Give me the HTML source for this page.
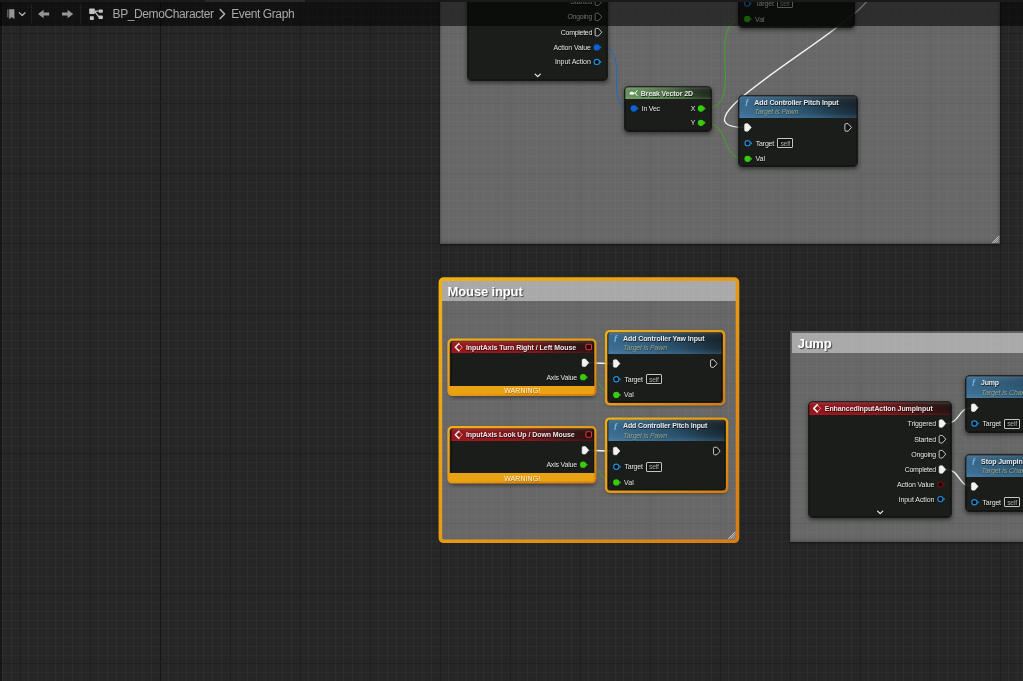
<!DOCTYPE html>
<html lang="en"><head><meta charset="utf-8"><title>BP_DemoCharacter - Event Graph</title>
<style>
html,body{margin:0;padding:0}
body{width:1023px;height:681px;overflow:hidden;background:#262626;position:relative;font-family:'Liberation Sans',sans-serif}
.layer{position:absolute;left:0;top:0}
#txt,#top{position:absolute;left:0;top:0;width:1023px;height:681px;will-change:transform;transform:translateZ(0)}
.t{position:absolute;white-space:pre;display:block}
.cm{position:absolute;background:rgba(255,255,255,.3);box-shadow:inset 0 0 0 1.6px rgba(0,0,0,.10), inset -2px -2px 4px rgba(0,0,0,.10), 0 1px 2px rgba(0,0,0,.5)}
.ct{position:absolute;background:rgba(255,255,255,.44)}
.node{position:absolute;box-sizing:border-box;background:rgba(18,21,18,.90);box-shadow:0 0 0 0.8px rgba(5,5,5,.85), 0 2px 4px 0.5px rgba(0,0,0,.5);overflow:hidden}
.hd{position:absolute;left:0;top:0;right:0}
.node::after{content:'';position:absolute;left:0;top:0;right:0;bottom:0;border-radius:inherit;box-shadow:inset 0 0 0 0.5px rgba(0,0,0,.55)}
.hd.blue{background:linear-gradient(180deg,rgba(255,255,255,.16) 0,rgba(255,255,255,.05) 14%,rgba(255,255,255,0) 35%,rgba(110,175,225,0) 78%,rgba(110,175,225,.16) 100%),linear-gradient(29deg,#41739a 0%,#366484 25%,#2b526d 50%,#1f3849 70%,#18252e 88%,#161d22 100%)}
.hd.red{background:linear-gradient(180deg,rgba(255,255,255,.20) 0,rgba(255,255,255,.04) 18%,rgba(255,255,255,0) 40%,rgba(255,40,50,0) 80%,rgba(255,40,50,.16) 100%),linear-gradient(40deg,#97161c 0%,#8a161b 35%,#6a1519 58%,#3a1314 80%,#1f1413 100%)}
.hd.green{background:linear-gradient(180deg,rgba(255,255,255,.18) 0,rgba(255,255,255,.04) 20%,rgba(255,255,255,0) 40%,rgba(160,230,150,0) 78%,rgba(160,230,150,.16) 100%),linear-gradient(40deg,#6a9662 0%,#5d8856 30%,#48683f 55%,#2a3a27 78%,#1b211a 100%)}
.warn{position:absolute;background:#e9a212}
.selfbox{position:absolute;width:16.1px;height:10px;box-sizing:border-box;border:0.9px solid #c4c4c4;border-radius:1px;background:rgba(0,0,0,.25)}
#strip{position:absolute;left:0;top:0;width:1023px;height:2px;background:#1a1a1a}
#tabline{position:absolute;left:205px;top:0;width:99.5px;height:1.7px;background:#2b2b2b}
#bar{position:absolute;left:0;top:2px;width:1023px;height:24px;background:rgba(0,0,0,.55)}
#edge{position:absolute;left:0;top:0;width:2px;height:681px;background:rgba(0,0,0,.42)}
.sep{position:absolute;top:4px;width:1px;height:20px;background:rgba(255,255,255,.06)}
</style></head>
<body>
<svg class="layer" width="1023" height="681" viewBox="0 0 1023 681" shape-rendering="crispEdges"><rect x="2" y="0" width="1" height="681" fill="#2d2d2d"/><rect x="11" y="0" width="1" height="681" fill="#2d2d2d"/><rect x="28" y="0" width="1" height="681" fill="#2d2d2d"/><rect x="37" y="0" width="1" height="681" fill="#2d2d2d"/><rect x="46" y="0" width="1" height="681" fill="#2d2d2d"/><rect x="55" y="0" width="1" height="681" fill="#2d2d2d"/><rect x="63" y="0" width="1" height="681" fill="#2d2d2d"/><rect x="72" y="0" width="1" height="681" fill="#2d2d2d"/><rect x="81" y="0" width="1" height="681" fill="#2d2d2d"/><rect x="98" y="0" width="1" height="681" fill="#2d2d2d"/><rect x="107" y="0" width="1" height="681" fill="#2d2d2d"/><rect x="116" y="0" width="1" height="681" fill="#2d2d2d"/><rect x="125" y="0" width="1" height="681" fill="#2d2d2d"/><rect x="133" y="0" width="1" height="681" fill="#2d2d2d"/><rect x="142" y="0" width="1" height="681" fill="#2d2d2d"/><rect x="151" y="0" width="1" height="681" fill="#2d2d2d"/><rect x="168" y="0" width="1" height="681" fill="#2d2d2d"/><rect x="177" y="0" width="1" height="681" fill="#2d2d2d"/><rect x="186" y="0" width="1" height="681" fill="#2d2d2d"/><rect x="195" y="0" width="1" height="681" fill="#2d2d2d"/><rect x="203" y="0" width="1" height="681" fill="#2d2d2d"/><rect x="212" y="0" width="1" height="681" fill="#2d2d2d"/><rect x="221" y="0" width="1" height="681" fill="#2d2d2d"/><rect x="238" y="0" width="1" height="681" fill="#2d2d2d"/><rect x="247" y="0" width="1" height="681" fill="#2d2d2d"/><rect x="256" y="0" width="1" height="681" fill="#2d2d2d"/><rect x="265" y="0" width="1" height="681" fill="#2d2d2d"/><rect x="273" y="0" width="1" height="681" fill="#2d2d2d"/><rect x="282" y="0" width="1" height="681" fill="#2d2d2d"/><rect x="291" y="0" width="1" height="681" fill="#2d2d2d"/><rect x="308" y="0" width="1" height="681" fill="#2d2d2d"/><rect x="317" y="0" width="1" height="681" fill="#2d2d2d"/><rect x="326" y="0" width="1" height="681" fill="#2d2d2d"/><rect x="335" y="0" width="1" height="681" fill="#2d2d2d"/><rect x="343" y="0" width="1" height="681" fill="#2d2d2d"/><rect x="352" y="0" width="1" height="681" fill="#2d2d2d"/><rect x="361" y="0" width="1" height="681" fill="#2d2d2d"/><rect x="378" y="0" width="1" height="681" fill="#2d2d2d"/><rect x="387" y="0" width="1" height="681" fill="#2d2d2d"/><rect x="396" y="0" width="1" height="681" fill="#2d2d2d"/><rect x="405" y="0" width="1" height="681" fill="#2d2d2d"/><rect x="413" y="0" width="1" height="681" fill="#2d2d2d"/><rect x="422" y="0" width="1" height="681" fill="#2d2d2d"/><rect x="431" y="0" width="1" height="681" fill="#2d2d2d"/><rect x="448" y="0" width="1" height="681" fill="#2d2d2d"/><rect x="457" y="0" width="1" height="681" fill="#2d2d2d"/><rect x="466" y="0" width="1" height="681" fill="#2d2d2d"/><rect x="475" y="0" width="1" height="681" fill="#2d2d2d"/><rect x="483" y="0" width="1" height="681" fill="#2d2d2d"/><rect x="492" y="0" width="1" height="681" fill="#2d2d2d"/><rect x="501" y="0" width="1" height="681" fill="#2d2d2d"/><rect x="518" y="0" width="1" height="681" fill="#2d2d2d"/><rect x="527" y="0" width="1" height="681" fill="#2d2d2d"/><rect x="536" y="0" width="1" height="681" fill="#2d2d2d"/><rect x="545" y="0" width="1" height="681" fill="#2d2d2d"/><rect x="553" y="0" width="1" height="681" fill="#2d2d2d"/><rect x="562" y="0" width="1" height="681" fill="#2d2d2d"/><rect x="571" y="0" width="1" height="681" fill="#2d2d2d"/><rect x="588" y="0" width="1" height="681" fill="#2d2d2d"/><rect x="597" y="0" width="1" height="681" fill="#2d2d2d"/><rect x="606" y="0" width="1" height="681" fill="#2d2d2d"/><rect x="615" y="0" width="1" height="681" fill="#2d2d2d"/><rect x="623" y="0" width="1" height="681" fill="#2d2d2d"/><rect x="632" y="0" width="1" height="681" fill="#2d2d2d"/><rect x="641" y="0" width="1" height="681" fill="#2d2d2d"/><rect x="658" y="0" width="1" height="681" fill="#2d2d2d"/><rect x="667" y="0" width="1" height="681" fill="#2d2d2d"/><rect x="676" y="0" width="1" height="681" fill="#2d2d2d"/><rect x="685" y="0" width="1" height="681" fill="#2d2d2d"/><rect x="693" y="0" width="1" height="681" fill="#2d2d2d"/><rect x="702" y="0" width="1" height="681" fill="#2d2d2d"/><rect x="711" y="0" width="1" height="681" fill="#2d2d2d"/><rect x="728" y="0" width="1" height="681" fill="#2d2d2d"/><rect x="737" y="0" width="1" height="681" fill="#2d2d2d"/><rect x="746" y="0" width="1" height="681" fill="#2d2d2d"/><rect x="755" y="0" width="1" height="681" fill="#2d2d2d"/><rect x="763" y="0" width="1" height="681" fill="#2d2d2d"/><rect x="772" y="0" width="1" height="681" fill="#2d2d2d"/><rect x="781" y="0" width="1" height="681" fill="#2d2d2d"/><rect x="798" y="0" width="1" height="681" fill="#2d2d2d"/><rect x="807" y="0" width="1" height="681" fill="#2d2d2d"/><rect x="816" y="0" width="1" height="681" fill="#2d2d2d"/><rect x="825" y="0" width="1" height="681" fill="#2d2d2d"/><rect x="833" y="0" width="1" height="681" fill="#2d2d2d"/><rect x="842" y="0" width="1" height="681" fill="#2d2d2d"/><rect x="851" y="0" width="1" height="681" fill="#2d2d2d"/><rect x="868" y="0" width="1" height="681" fill="#2d2d2d"/><rect x="877" y="0" width="1" height="681" fill="#2d2d2d"/><rect x="886" y="0" width="1" height="681" fill="#2d2d2d"/><rect x="895" y="0" width="1" height="681" fill="#2d2d2d"/><rect x="903" y="0" width="1" height="681" fill="#2d2d2d"/><rect x="912" y="0" width="1" height="681" fill="#2d2d2d"/><rect x="921" y="0" width="1" height="681" fill="#2d2d2d"/><rect x="938" y="0" width="1" height="681" fill="#2d2d2d"/><rect x="947" y="0" width="1" height="681" fill="#2d2d2d"/><rect x="956" y="0" width="1" height="681" fill="#2d2d2d"/><rect x="965" y="0" width="1" height="681" fill="#2d2d2d"/><rect x="973" y="0" width="1" height="681" fill="#2d2d2d"/><rect x="982" y="0" width="1" height="681" fill="#2d2d2d"/><rect x="991" y="0" width="1" height="681" fill="#2d2d2d"/><rect x="1008" y="0" width="1" height="681" fill="#2d2d2d"/><rect x="1017" y="0" width="1" height="681" fill="#2d2d2d"/><rect x="0" y="7" width="1023" height="1" fill="#2d2d2d"/><rect x="0" y="16" width="1023" height="1" fill="#2d2d2d"/><rect x="0" y="25" width="1023" height="1" fill="#2d2d2d"/><rect x="0" y="42" width="1023" height="1" fill="#2d2d2d"/><rect x="0" y="51" width="1023" height="1" fill="#2d2d2d"/><rect x="0" y="60" width="1023" height="1" fill="#2d2d2d"/><rect x="0" y="68" width="1023" height="1" fill="#2d2d2d"/><rect x="0" y="77" width="1023" height="1" fill="#2d2d2d"/><rect x="0" y="86" width="1023" height="1" fill="#2d2d2d"/><rect x="0" y="95" width="1023" height="1" fill="#2d2d2d"/><rect x="0" y="112" width="1023" height="1" fill="#2d2d2d"/><rect x="0" y="121" width="1023" height="1" fill="#2d2d2d"/><rect x="0" y="130" width="1023" height="1" fill="#2d2d2d"/><rect x="0" y="138" width="1023" height="1" fill="#2d2d2d"/><rect x="0" y="147" width="1023" height="1" fill="#2d2d2d"/><rect x="0" y="156" width="1023" height="1" fill="#2d2d2d"/><rect x="0" y="165" width="1023" height="1" fill="#2d2d2d"/><rect x="0" y="182" width="1023" height="1" fill="#2d2d2d"/><rect x="0" y="191" width="1023" height="1" fill="#2d2d2d"/><rect x="0" y="200" width="1023" height="1" fill="#2d2d2d"/><rect x="0" y="208" width="1023" height="1" fill="#2d2d2d"/><rect x="0" y="217" width="1023" height="1" fill="#2d2d2d"/><rect x="0" y="226" width="1023" height="1" fill="#2d2d2d"/><rect x="0" y="235" width="1023" height="1" fill="#2d2d2d"/><rect x="0" y="252" width="1023" height="1" fill="#2d2d2d"/><rect x="0" y="261" width="1023" height="1" fill="#2d2d2d"/><rect x="0" y="270" width="1023" height="1" fill="#2d2d2d"/><rect x="0" y="278" width="1023" height="1" fill="#2d2d2d"/><rect x="0" y="287" width="1023" height="1" fill="#2d2d2d"/><rect x="0" y="296" width="1023" height="1" fill="#2d2d2d"/><rect x="0" y="305" width="1023" height="1" fill="#2d2d2d"/><rect x="0" y="322" width="1023" height="1" fill="#2d2d2d"/><rect x="0" y="331" width="1023" height="1" fill="#2d2d2d"/><rect x="0" y="340" width="1023" height="1" fill="#2d2d2d"/><rect x="0" y="348" width="1023" height="1" fill="#2d2d2d"/><rect x="0" y="357" width="1023" height="1" fill="#2d2d2d"/><rect x="0" y="366" width="1023" height="1" fill="#2d2d2d"/><rect x="0" y="375" width="1023" height="1" fill="#2d2d2d"/><rect x="0" y="392" width="1023" height="1" fill="#2d2d2d"/><rect x="0" y="401" width="1023" height="1" fill="#2d2d2d"/><rect x="0" y="410" width="1023" height="1" fill="#2d2d2d"/><rect x="0" y="418" width="1023" height="1" fill="#2d2d2d"/><rect x="0" y="427" width="1023" height="1" fill="#2d2d2d"/><rect x="0" y="436" width="1023" height="1" fill="#2d2d2d"/><rect x="0" y="445" width="1023" height="1" fill="#2d2d2d"/><rect x="0" y="462" width="1023" height="1" fill="#2d2d2d"/><rect x="0" y="471" width="1023" height="1" fill="#2d2d2d"/><rect x="0" y="480" width="1023" height="1" fill="#2d2d2d"/><rect x="0" y="488" width="1023" height="1" fill="#2d2d2d"/><rect x="0" y="497" width="1023" height="1" fill="#2d2d2d"/><rect x="0" y="506" width="1023" height="1" fill="#2d2d2d"/><rect x="0" y="515" width="1023" height="1" fill="#2d2d2d"/><rect x="0" y="532" width="1023" height="1" fill="#2d2d2d"/><rect x="0" y="541" width="1023" height="1" fill="#2d2d2d"/><rect x="0" y="550" width="1023" height="1" fill="#2d2d2d"/><rect x="0" y="558" width="1023" height="1" fill="#2d2d2d"/><rect x="0" y="567" width="1023" height="1" fill="#2d2d2d"/><rect x="0" y="576" width="1023" height="1" fill="#2d2d2d"/><rect x="0" y="585" width="1023" height="1" fill="#2d2d2d"/><rect x="0" y="602" width="1023" height="1" fill="#2d2d2d"/><rect x="0" y="611" width="1023" height="1" fill="#2d2d2d"/><rect x="0" y="620" width="1023" height="1" fill="#2d2d2d"/><rect x="0" y="628" width="1023" height="1" fill="#2d2d2d"/><rect x="0" y="637" width="1023" height="1" fill="#2d2d2d"/><rect x="0" y="646" width="1023" height="1" fill="#2d2d2d"/><rect x="0" y="655" width="1023" height="1" fill="#2d2d2d"/><rect x="0" y="672" width="1023" height="1" fill="#2d2d2d"/><rect x="20" y="0" width="1" height="681" fill="#1f1f1f"/><rect x="90" y="0" width="1" height="681" fill="#1f1f1f"/><rect x="160" y="0" width="1" height="681" fill="#151515"/><rect x="230" y="0" width="1" height="681" fill="#1f1f1f"/><rect x="300" y="0" width="1" height="681" fill="#1f1f1f"/><rect x="370" y="0" width="1" height="681" fill="#1f1f1f"/><rect x="440" y="0" width="1" height="681" fill="#1f1f1f"/><rect x="510" y="0" width="1" height="681" fill="#1f1f1f"/><rect x="580" y="0" width="1" height="681" fill="#1f1f1f"/><rect x="650" y="0" width="1" height="681" fill="#1f1f1f"/><rect x="720" y="0" width="1" height="681" fill="#1f1f1f"/><rect x="790" y="0" width="1" height="681" fill="#1f1f1f"/><rect x="860" y="0" width="1" height="681" fill="#1f1f1f"/><rect x="930" y="0" width="1" height="681" fill="#1f1f1f"/><rect x="1000" y="0" width="1" height="681" fill="#1f1f1f"/><rect x="0" y="33" width="1023" height="1" fill="#1f1f1f"/><rect x="0" y="103" width="1023" height="1" fill="#1f1f1f"/><rect x="0" y="173" width="1023" height="1" fill="#1f1f1f"/><rect x="0" y="243" width="1023" height="1" fill="#1f1f1f"/><rect x="0" y="313" width="1023" height="1" fill="#1f1f1f"/><rect x="0" y="383" width="1023" height="1" fill="#1f1f1f"/><rect x="0" y="453" width="1023" height="1" fill="#1f1f1f"/><rect x="0" y="523" width="1023" height="1" fill="#1f1f1f"/><rect x="0" y="593" width="1023" height="1" fill="#1f1f1f"/><rect x="0" y="663" width="1023" height="1" fill="#1f1f1f"/></svg>
<div class="cm" style="left:440px;top:-40px;width:560.2px;height:283.8px"></div><div class="cm" style="left:441px;top:280px;width:296px;height:260.5px;box-shadow:none"><div class="ct" style="left:0;top:0;right:0;height:21.2px"></div></div><div class="cm" style="left:789.8px;top:331.4px;width:300px;height:210.4px"><div class="ct" style="left:2.3px;top:1.8px;right:0;height:20.3px"></div></div>
<svg class="layer" width="1023" height="681" viewBox="0 0 1023 681"><path d="M601.80,47.40 C631.90,47.40 600.90,108.50 631.00,108.50" fill="none" stroke="#1c69c4" stroke-width="0.95" stroke-linecap="round" opacity="1"/><path d="M705.80,108.50 C748.57,108.50 701.63,18.80 744.40,18.80" fill="none" stroke="#3cb01c" stroke-width="0.9" stroke-linecap="round" opacity="1"/><path d="M705.80,122.80 C730.67,122.80 719.53,158.80 744.40,158.80" fill="none" stroke="#3cb01c" stroke-width="0.9" stroke-linecap="round" opacity="1"/><path d="M852.8,-15 C946,-15 646.5,127.4 744.4,127.4" fill="none" stroke="#f2f2f2" stroke-width="1.35" stroke-linecap="round" opacity="1"/><path d="M588.5,362.80 C598,362.80 604,363.60 613.5,363.60" fill="none" stroke="#f4f4f4" stroke-width="1.4" stroke-linecap="round" opacity="1"/><path d="M587.80,377.20 C602.23,377.20 598.97,394.90 613.40,394.90" fill="none" stroke="#3cb01c" stroke-width="0.9" stroke-linecap="round" opacity="1"/><path d="M588.5,450.30 C598,450.30 604,451.10 613.5,451.10" fill="none" stroke="#f4f4f4" stroke-width="1.4" stroke-linecap="round" opacity="1"/><path d="M587.80,464.70 C602.23,464.70 598.97,482.40 613.40,482.40" fill="none" stroke="#3cb01c" stroke-width="0.9" stroke-linecap="round" opacity="1"/><path d="M946.00,423.60 C960.00,423.60 958.00,407.60 972.00,407.60" fill="none" stroke="#f4f4f4" stroke-width="1.3" stroke-linecap="round" opacity="1"/><path d="M946.00,469.50 C960.27,469.50 957.73,486.30 972.00,486.30" fill="none" stroke="#f4f4f4" stroke-width="1.3" stroke-linecap="round" opacity="1"/></svg>
<div class="node" style="left:467.70px;top:-35.30px;width:139.30px;height:115.30px;border-radius:3.5px"><div class="hd red" style="height:12.70px;border-radius:3.0px 3.0px 0 0"></div></div><div class="node" style="left:625.20px;top:87.10px;width:85.80px;height:44.00px;border-radius:3.5px"><div class="hd green" style="height:12.30px;border-radius:3.0px 3.0px 0 0"></div></div><div class="node" style="left:738.90px;top:-44.00px;width:115.00px;height:70.60px;border-radius:3.5px"><div class="hd blue" style="height:22.00px;border-radius:3.0px 3.0px 0 0"></div></div><div class="selfbox" style="left:776.80px;top:-1.60px"></div><div class="node" style="left:739.30px;top:95.80px;width:117.40px;height:70.60px;border-radius:3.5px"><div class="hd blue" style="height:22.00px;border-radius:3.0px 3.0px 0 0"></div></div><div class="selfbox" style="left:777.20px;top:138.20px"></div><div class="node" style="left:450.50px;top:340.70px;width:143.10px;height:53.60px;border-radius:3.5px"><div class="hd red" style="height:12.60px;border-radius:3.0px 3.0px 0 0"></div></div><div class="warn" style="left:448.6px;top:385.80px;width:146.8px;height:9.4px;border-radius:0 0 3.5px 3.5px"></div><div class="node" style="left:450.50px;top:428.20px;width:143.10px;height:53.60px;border-radius:3.5px"><div class="hd red" style="height:12.60px;border-radius:3.0px 3.0px 0 0"></div></div><div class="warn" style="left:448.6px;top:473.30px;width:146.8px;height:9.4px;border-radius:0 0 3.5px 3.5px"></div><div class="node" style="left:608.00px;top:331.90px;width:114.40px;height:70.60px;border-radius:3.5px"><div class="hd blue" style="height:22.00px;border-radius:3.0px 3.0px 0 0"></div></div><div class="selfbox" style="left:645.90px;top:374.30px"></div><div class="node" style="left:608.00px;top:419.40px;width:117.40px;height:70.60px;border-radius:3.5px"><div class="hd blue" style="height:22.00px;border-radius:3.0px 3.0px 0 0"></div></div><div class="selfbox" style="left:645.90px;top:461.80px"></div><div class="node" style="left:809.40px;top:402.00px;width:141.60px;height:114.90px;border-radius:3.5px"><div class="hd red" style="height:12.70px;border-radius:3.0px 3.0px 0 0"></div></div><div class="node" style="left:966.10px;top:376.10px;width:128.40px;height:55.80px;border-radius:3.5px"><div class="hd blue" style="height:22.00px;border-radius:3.0px 3.0px 0 0"></div></div><div class="selfbox" style="left:1004.00px;top:418.50px"></div><div class="node" style="left:966.10px;top:454.80px;width:128.40px;height:55.80px;border-radius:3.5px"><div class="hd blue" style="height:22.00px;border-radius:3.0px 3.0px 0 0"></div></div><div class="selfbox" style="left:1004.00px;top:497.20px"></div>
<svg class="layer" width="1023" height="681" viewBox="0 0 1023 681"><defs><linearGradient id="sel" x1="0" y1="0" x2="1" y2="1"><stop offset="0" stop-color="#efb015"/><stop offset="0.5" stop-color="#e89a14"/><stop offset="1" stop-color="#d67c12"/></linearGradient></defs><g><path d="M997.40,243.00 L999.20,241.20" stroke="#e8e8e8" stroke-width="0.9" opacity="0.55"/><path d="M995.60,243.00 L999.20,239.40" stroke="#e8e8e8" stroke-width="0.9" opacity="0.65"/><path d="M993.80,243.00 L999.20,237.60" stroke="#e8e8e8" stroke-width="0.9" opacity="0.75"/><path d="M992.20,243.00 L999.20,236.00" stroke="#e8e8e8" stroke-width="0.9" opacity="0.85"/></g><rect x="440.4" y="279.1" width="297.1" height="262.2" rx="3.2" fill="none" stroke="url(#sel)" stroke-width="3.6"/><g><path d="M733.50,538.80 L735.30,537.00" stroke="#e8e8e8" stroke-width="0.9" opacity="0.55"/><path d="M731.70,538.80 L735.30,535.20" stroke="#e8e8e8" stroke-width="0.9" opacity="0.65"/><path d="M729.90,538.80 L735.30,533.40" stroke="#e8e8e8" stroke-width="0.9" opacity="0.75"/><path d="M728.30,538.80 L735.30,531.80" stroke="#e8e8e8" stroke-width="0.9" opacity="0.85"/></g><path d="M596.35,-2.05 L598.45,-2.05 L601.75,1.70 L598.45,5.45 L596.35,5.45 Q595.15,5.45 595.15,4.25 L595.15,-0.85 Q595.15,-2.05 596.35,-2.05 Z" fill="#0c0c0c" fill-opacity="0.35" stroke="#e6e6e6" stroke-width="0.85" stroke-linejoin="round" opacity="1"/><path d="M596.35,13.15 L598.45,13.15 L601.75,16.90 L598.45,20.65 L596.35,20.65 Q595.15,20.65 595.15,19.45 L595.15,14.35 Q595.15,13.15 596.35,13.15 Z" fill="#0c0c0c" fill-opacity="0.35" stroke="#e6e6e6" stroke-width="0.85" stroke-linejoin="round" opacity="1"/><path d="M596.35,28.45 L598.45,28.45 L601.75,32.20 L598.45,35.95 L596.35,35.95 Q595.15,35.95 595.15,34.75 L595.15,29.65 Q595.15,28.45 596.35,28.45 Z" fill="#0c0c0c" fill-opacity="0.35" stroke="#e6e6e6" stroke-width="0.85" stroke-linejoin="round" opacity="1"/><g opacity="1"><circle cx="596.80" cy="47.40" r="3.15" fill="#0b62d6"/><path d="M599.95,45.95 L601.60,47.40 L599.95,48.85 Z" fill="#0b62d6"/></g><g opacity="1"><circle cx="596.80" cy="61.90" r="2.6" fill="#060606" stroke="#1c90dc" stroke-width="1.15"/><path d="M599.95,60.45 L601.60,61.90 L599.95,63.35 Z" fill="#1c90dc"/></g><path d="M535.15,74.10 L537.75,76.70 L540.35,74.10" fill="none" stroke="#f0f0f0" stroke-width="1.2" stroke-linecap="round" stroke-linejoin="round"/><g><rect x="629.6" y="91.7" width="4.4" height="3.0" rx="1.5" fill="#f4f4f4"/><path d="M634.4,93.2 L635.8,93.2 M635.6,92.6 L637.2,90.6 M635.6,93.8 L637.2,95.8" stroke="#f4f4f4" stroke-width="1" stroke-linecap="round" fill="none"/></g><g opacity="1"><circle cx="633.80" cy="108.50" r="3.15" fill="#0b62d6"/><path d="M636.95,107.05 L638.60,108.50 L636.95,109.95 Z" fill="#0b62d6"/></g><g opacity="1"><circle cx="700.90" cy="108.50" r="3.15" fill="#36cc0a"/><path d="M704.05,107.05 L705.70,108.50 L704.05,109.95 Z" fill="#36cc0a"/></g><g opacity="1"><circle cx="700.90" cy="122.80" r="3.15" fill="#36cc0a"/><path d="M704.05,121.35 L705.70,122.80 L704.05,124.25 Z" fill="#36cc0a"/></g><path d="M745.45,-16.15 L747.55,-16.15 L750.85,-12.40 L747.55,-8.65 L745.45,-8.65 Q744.25,-8.65 744.25,-9.85 L744.25,-14.95 Q744.25,-16.15 745.45,-16.15 Z" fill="#f2f2f2" stroke="#f2f2f2" stroke-width="0.6" stroke-linejoin="round" opacity="1"/><path d="M843.25,-16.15 L845.35,-16.15 L848.65,-12.40 L845.35,-8.65 L843.25,-8.65 Q842.05,-8.65 842.05,-9.85 L842.05,-14.95 Q842.05,-16.15 843.25,-16.15 Z" fill="#0c0c0c" fill-opacity="0.35" stroke="#e6e6e6" stroke-width="0.85" stroke-linejoin="round" opacity="1"/><g opacity="1"><circle cx="747.20" cy="3.40" r="2.6" fill="#060606" stroke="#1c90dc" stroke-width="1.15"/><path d="M750.35,1.95 L752.00,3.40 L750.35,4.85 Z" fill="#1c90dc"/></g><g opacity="1"><circle cx="747.20" cy="19.00" r="3.15" fill="#36cc0a"/><path d="M750.35,17.55 L752.00,19.00 L750.35,20.45 Z" fill="#36cc0a"/></g><path d="M745.85,123.65 L747.95,123.65 L751.25,127.40 L747.95,131.15 L745.85,131.15 Q744.65,131.15 744.65,129.95 L744.65,124.85 Q744.65,123.65 745.85,123.65 Z" fill="#f2f2f2" stroke="#f2f2f2" stroke-width="0.6" stroke-linejoin="round" opacity="1"/><path d="M846.05,123.65 L848.15,123.65 L851.45,127.40 L848.15,131.15 L846.05,131.15 Q844.85,131.15 844.85,129.95 L844.85,124.85 Q844.85,123.65 846.05,123.65 Z" fill="#0c0c0c" fill-opacity="0.35" stroke="#e6e6e6" stroke-width="0.85" stroke-linejoin="round" opacity="1"/><g opacity="1"><circle cx="747.60" cy="143.20" r="2.6" fill="#060606" stroke="#1c90dc" stroke-width="1.15"/><path d="M750.75,141.75 L752.40,143.20 L750.75,144.65 Z" fill="#1c90dc"/></g><g opacity="1"><circle cx="747.60" cy="158.80" r="3.15" fill="#36cc0a"/><path d="M750.75,157.35 L752.40,158.80 L750.75,160.25 Z" fill="#36cc0a"/></g><rect x="448.50" y="339.70" width="146.90" height="55.30" rx="3.90" fill="none" stroke="url(#sel)" stroke-width="2.2"/><g fill="none" stroke-linejoin="round" stroke-linecap="round"><path d="M458.80,343.80 L462.30,347.30 L458.80,350.80" stroke="#f0c8c8" stroke-width="0.9" opacity=".85"/><path d="M458.80,343.80 L455.30,347.30 L458.80,350.80" stroke="#f6f6f6" stroke-width="1.5"/></g><rect x="585.9" y="344.20" width="5.6" height="5.6" rx="1.2" fill="#1a0606" stroke="#e8303c" stroke-width="1.1"/><path d="M583.35,359.05 L585.45,359.05 L588.75,362.80 L585.45,366.55 L583.35,366.55 Q582.15,366.55 582.15,365.35 L582.15,360.25 Q582.15,359.05 583.35,359.05 Z" fill="#f2f2f2" stroke="#f2f2f2" stroke-width="0.6" stroke-linejoin="round" opacity="1"/><g opacity="1"><circle cx="583.10" cy="377.20" r="3.15" fill="#36cc0a"/><path d="M586.25,375.75 L587.90,377.20 L586.25,378.65 Z" fill="#36cc0a"/></g><rect x="448.50" y="427.20" width="146.90" height="55.30" rx="3.90" fill="none" stroke="url(#sel)" stroke-width="2.2"/><g fill="none" stroke-linejoin="round" stroke-linecap="round"><path d="M458.80,431.30 L462.30,434.80 L458.80,438.30" stroke="#f0c8c8" stroke-width="0.9" opacity=".85"/><path d="M458.80,431.30 L455.30,434.80 L458.80,438.30" stroke="#f6f6f6" stroke-width="1.5"/></g><rect x="585.9" y="431.70" width="5.6" height="5.6" rx="1.2" fill="#1a0606" stroke="#e8303c" stroke-width="1.1"/><path d="M583.35,446.55 L585.45,446.55 L588.75,450.30 L585.45,454.05 L583.35,454.05 Q582.15,454.05 582.15,452.85 L582.15,447.75 Q582.15,446.55 583.35,446.55 Z" fill="#f2f2f2" stroke="#f2f2f2" stroke-width="0.6" stroke-linejoin="round" opacity="1"/><g opacity="1"><circle cx="583.10" cy="464.70" r="3.15" fill="#36cc0a"/><path d="M586.25,463.25 L587.90,464.70 L586.25,466.15 Z" fill="#36cc0a"/></g><rect x="606.10" y="331.10" width="118.00" height="73.20" rx="3.80" fill="none" stroke="url(#sel)" stroke-width="2.4"/><path d="M614.55,359.75 L616.65,359.75 L619.95,363.50 L616.65,367.25 L614.55,367.25 Q613.35,367.25 613.35,366.05 L613.35,360.95 Q613.35,359.75 614.55,359.75 Z" fill="#f2f2f2" stroke="#f2f2f2" stroke-width="0.6" stroke-linejoin="round" opacity="1"/><path d="M711.75,359.75 L713.85,359.75 L717.15,363.50 L713.85,367.25 L711.75,367.25 Q710.55,367.25 710.55,366.05 L710.55,360.95 Q710.55,359.75 711.75,359.75 Z" fill="#0c0c0c" fill-opacity="0.35" stroke="#e6e6e6" stroke-width="0.85" stroke-linejoin="round" opacity="1"/><g opacity="1"><circle cx="616.30" cy="379.30" r="2.6" fill="#060606" stroke="#1c90dc" stroke-width="1.15"/><path d="M619.45,377.85 L621.10,379.30 L619.45,380.75 Z" fill="#1c90dc"/></g><g opacity="1"><circle cx="616.30" cy="394.90" r="3.15" fill="#36cc0a"/><path d="M619.45,393.45 L621.10,394.90 L619.45,396.35 Z" fill="#36cc0a"/></g><rect x="606.10" y="418.60" width="121.00" height="73.20" rx="3.80" fill="none" stroke="url(#sel)" stroke-width="2.4"/><path d="M614.55,447.25 L616.65,447.25 L619.95,451.00 L616.65,454.75 L614.55,454.75 Q613.35,454.75 613.35,453.55 L613.35,448.45 Q613.35,447.25 614.55,447.25 Z" fill="#f2f2f2" stroke="#f2f2f2" stroke-width="0.6" stroke-linejoin="round" opacity="1"/><path d="M714.75,447.25 L716.85,447.25 L720.15,451.00 L716.85,454.75 L714.75,454.75 Q713.55,454.75 713.55,453.55 L713.55,448.45 Q713.55,447.25 714.75,447.25 Z" fill="#0c0c0c" fill-opacity="0.35" stroke="#e6e6e6" stroke-width="0.85" stroke-linejoin="round" opacity="1"/><g opacity="1"><circle cx="616.30" cy="466.80" r="2.6" fill="#060606" stroke="#1c90dc" stroke-width="1.15"/><path d="M619.45,465.35 L621.10,466.80 L619.45,468.25 Z" fill="#1c90dc"/></g><g opacity="1"><circle cx="616.30" cy="482.40" r="3.15" fill="#36cc0a"/><path d="M619.45,480.95 L621.10,482.40 L619.45,483.85 Z" fill="#36cc0a"/></g><g fill="none" stroke-linejoin="round" stroke-linecap="round"><path d="M817.20,404.90 L820.70,408.40 L817.20,411.90" stroke="#f0c8c8" stroke-width="0.9" opacity=".85"/><path d="M817.20,404.90 L813.70,408.40 L817.20,411.90" stroke="#f6f6f6" stroke-width="1.5"/></g><path d="M940.35,419.85 L942.45,419.85 L945.75,423.60 L942.45,427.35 L940.35,427.35 Q939.15,427.35 939.15,426.15 L939.15,421.05 Q939.15,419.85 940.35,419.85 Z" fill="#f2f2f2" stroke="#f2f2f2" stroke-width="0.6" stroke-linejoin="round" opacity="1"/><path d="M940.35,435.45 L942.45,435.45 L945.75,439.20 L942.45,442.95 L940.35,442.95 Q939.15,442.95 939.15,441.75 L939.15,436.65 Q939.15,435.45 940.35,435.45 Z" fill="#0c0c0c" fill-opacity="0.35" stroke="#e6e6e6" stroke-width="0.85" stroke-linejoin="round" opacity="1"/><path d="M940.35,450.45 L942.45,450.45 L945.75,454.20 L942.45,457.95 L940.35,457.95 Q939.15,457.95 939.15,456.75 L939.15,451.65 Q939.15,450.45 940.35,450.45 Z" fill="#0c0c0c" fill-opacity="0.35" stroke="#e6e6e6" stroke-width="0.85" stroke-linejoin="round" opacity="1"/><path d="M940.35,465.75 L942.45,465.75 L945.75,469.50 L942.45,473.25 L940.35,473.25 Q939.15,473.25 939.15,472.05 L939.15,466.95 Q939.15,465.75 940.35,465.75 Z" fill="#f2f2f2" stroke="#f2f2f2" stroke-width="0.6" stroke-linejoin="round" opacity="1"/><g opacity="1"><circle cx="940.40" cy="484.40" r="2.6" fill="#060606" stroke="#7a0c0c" stroke-width="1.15"/><path d="M943.55,482.95 L945.20,484.40 L943.55,485.85 Z" fill="#7a0c0c"/></g><g opacity="1"><circle cx="940.40" cy="499.10" r="2.6" fill="#060606" stroke="#1c90dc" stroke-width="1.15"/><path d="M943.55,497.65 L945.20,499.10 L943.55,500.55 Z" fill="#1c90dc"/></g><path d="M877.60,511.10 L880.20,513.70 L882.80,511.10" fill="none" stroke="#f0f0f0" stroke-width="1.2" stroke-linecap="round" stroke-linejoin="round"/><path d="M972.65,403.95 L974.75,403.95 L978.05,407.70 L974.75,411.45 L972.65,411.45 Q971.45,411.45 971.45,410.25 L971.45,405.15 Q971.45,403.95 972.65,403.95 Z" fill="#f2f2f2" stroke="#f2f2f2" stroke-width="0.6" stroke-linejoin="round" opacity="1"/><path d="M1083.85,403.95 L1085.95,403.95 L1089.25,407.70 L1085.95,411.45 L1083.85,411.45 Q1082.65,411.45 1082.65,410.25 L1082.65,405.15 Q1082.65,403.95 1083.85,403.95 Z" fill="#0c0c0c" fill-opacity="0.35" stroke="#e6e6e6" stroke-width="0.85" stroke-linejoin="round" opacity="1"/><g opacity="1"><circle cx="974.40" cy="423.50" r="2.6" fill="#060606" stroke="#1c90dc" stroke-width="1.15"/><path d="M977.55,422.05 L979.20,423.50 L977.55,424.95 Z" fill="#1c90dc"/></g><path d="M972.65,482.65 L974.75,482.65 L978.05,486.40 L974.75,490.15 L972.65,490.15 Q971.45,490.15 971.45,488.95 L971.45,483.85 Q971.45,482.65 972.65,482.65 Z" fill="#f2f2f2" stroke="#f2f2f2" stroke-width="0.6" stroke-linejoin="round" opacity="1"/><path d="M1083.85,482.65 L1085.95,482.65 L1089.25,486.40 L1085.95,490.15 L1083.85,490.15 Q1082.65,490.15 1082.65,488.95 L1082.65,483.85 Q1082.65,482.65 1083.85,482.65 Z" fill="#0c0c0c" fill-opacity="0.35" stroke="#e6e6e6" stroke-width="0.85" stroke-linejoin="round" opacity="1"/><g opacity="1"><circle cx="974.40" cy="502.20" r="2.6" fill="#060606" stroke="#1c90dc" stroke-width="1.15"/><path d="M977.55,500.75 L979.20,502.20 L977.55,503.65 Z" fill="#1c90dc"/></g></svg>
<div id="txt"><span class="t" style="left:447.60px;top:283.10px;line-height:17px;font-size:13px;font-weight:bold;font-style:normal;color:#ffffff;letter-spacing:-0.141px;text-shadow:1.1px 1.3px 0.9px rgba(0,0,0,.62);">Mouse input</span><span class="t" style="left:797.70px;top:335.40px;line-height:17px;font-size:13px;font-weight:bold;font-style:normal;color:#ffffff;letter-spacing:-0.243px;text-shadow:1.1px 1.3px 0.9px rgba(0,0,0,.62);">Jump</span><span class="t" style="left:570.30px;top:-3.80px;line-height:11px;font-size:7px;font-weight:normal;font-style:normal;color:#e4e4e4;letter-spacing:-0.111px;text-shadow:0.5px 0.6px 0.3px rgba(0,0,0,.7);">Started</span><span class="t" style="left:567.40px;top:11.40px;line-height:11px;font-size:7px;font-weight:normal;font-style:normal;color:#e4e4e4;letter-spacing:-0.253px;text-shadow:0.5px 0.6px 0.3px rgba(0,0,0,.7);">Ongoing</span><span class="t" style="left:560.80px;top:26.70px;line-height:11px;font-size:7px;font-weight:normal;font-style:normal;color:#e4e4e4;letter-spacing:-0.284px;text-shadow:0.5px 0.6px 0.3px rgba(0,0,0,.7);">Completed</span><span class="t" style="left:553.40px;top:41.90px;line-height:11px;font-size:7px;font-weight:normal;font-style:normal;color:#e4e4e4;letter-spacing:-0.116px;text-shadow:0.5px 0.6px 0.3px rgba(0,0,0,.7);">Action Value</span><span class="t" style="left:554.90px;top:56.40px;line-height:11px;font-size:7px;font-weight:normal;font-style:normal;color:#e4e4e4;letter-spacing:-0.058px;text-shadow:0.5px 0.6px 0.3px rgba(0,0,0,.7);">Input Action</span><span class="t" style="left:640.80px;top:87.90px;line-height:11px;font-size:7px;font-weight:bold;font-style:normal;color:#e8e8e8;letter-spacing:-0.100px;text-shadow:0.5px 0.6px 0.3px rgba(0,0,0,.7);">Break Vector 2D</span><span class="t" style="left:641.80px;top:103.00px;line-height:11px;font-size:7px;font-weight:normal;font-style:normal;color:#e4e4e4;letter-spacing:-0.245px;text-shadow:0.5px 0.6px 0.3px rgba(0,0,0,.7);">In Vec</span><span class="t" style="left:690.80px;top:103.00px;line-height:11px;font-size:7px;font-weight:normal;font-style:normal;color:#e4e4e4;letter-spacing:-0.472px;text-shadow:0.5px 0.6px 0.3px rgba(0,0,0,.7);">X</span><span class="t" style="left:690.80px;top:117.30px;line-height:11px;font-size:7px;font-weight:normal;font-style:normal;color:#e4e4e4;letter-spacing:-0.472px;text-shadow:0.5px 0.6px 0.3px rgba(0,0,0,.7);">Y</span><span class="t" style="left:744.30px;top:-43.80px;line-height:13px;font-size:9px;font-weight:bold;font-style:italic;color:#6cb7f2;font-family:'Liberation Serif',serif;">ƒ</span><span class="t" style="left:753.90px;top:-43.25px;line-height:11px;font-size:7px;font-weight:bold;font-style:normal;color:#e8e8e8;letter-spacing:-0.087px;text-shadow:0.5px 0.6px 0.3px rgba(0,0,0,.7);">Add Controller Yaw Input</span><span class="t" style="left:754.20px;top:-33.50px;line-height:11px;font-size:7px;font-weight:normal;font-style:italic;color:#92a184;letter-spacing:-0.175px;text-shadow:0.4px 0.5px 0 rgba(0,0,0,.3);">Target is Pawn</span><span class="t" style="left:755.30px;top:-2.10px;line-height:11px;font-size:7px;font-weight:normal;font-style:normal;color:#e4e4e4;letter-spacing:-0.178px;text-shadow:0.5px 0.6px 0.3px rgba(0,0,0,.7);">Target</span><span class="t" style="left:780.00px;top:-2.00px;line-height:11px;font-size:7px;font-weight:normal;font-style:normal;color:#a4a4a4;letter-spacing:-0.327px;">self</span><span class="t" style="left:755.00px;top:13.50px;line-height:11px;font-size:7px;font-weight:normal;font-style:normal;color:#e4e4e4;letter-spacing:-0.003px;text-shadow:0.5px 0.6px 0.3px rgba(0,0,0,.7);">Val</span><span class="t" style="left:744.70px;top:96.00px;line-height:13px;font-size:9px;font-weight:bold;font-style:italic;color:#6cb7f2;font-family:'Liberation Serif',serif;">ƒ</span><span class="t" style="left:754.30px;top:96.55px;line-height:11px;font-size:7px;font-weight:bold;font-style:normal;color:#e8e8e8;letter-spacing:-0.112px;text-shadow:0.5px 0.6px 0.3px rgba(0,0,0,.7);">Add Controller Pitch Input</span><span class="t" style="left:754.60px;top:106.30px;line-height:11px;font-size:7px;font-weight:normal;font-style:italic;color:#92a184;letter-spacing:-0.175px;text-shadow:0.4px 0.5px 0 rgba(0,0,0,.3);">Target is Pawn</span><span class="t" style="left:755.70px;top:137.70px;line-height:11px;font-size:7px;font-weight:normal;font-style:normal;color:#e4e4e4;letter-spacing:-0.178px;text-shadow:0.5px 0.6px 0.3px rgba(0,0,0,.7);">Target</span><span class="t" style="left:780.40px;top:137.80px;line-height:11px;font-size:7px;font-weight:normal;font-style:normal;color:#a4a4a4;letter-spacing:-0.327px;">self</span><span class="t" style="left:755.40px;top:153.30px;line-height:11px;font-size:7px;font-weight:normal;font-style:normal;color:#e4e4e4;letter-spacing:-0.003px;text-shadow:0.5px 0.6px 0.3px rgba(0,0,0,.7);">Val</span><span class="t" style="left:465.90px;top:341.50px;line-height:11px;font-size:7px;font-weight:bold;font-style:normal;color:#e8e8e8;letter-spacing:-0.036px;text-shadow:0.5px 0.6px 0.3px rgba(0,0,0,.7);">InputAxis Turn Right / Left Mouse</span><span class="t" style="left:546.40px;top:371.70px;line-height:11px;font-size:7px;font-weight:normal;font-style:normal;color:#e4e4e4;letter-spacing:-0.196px;text-shadow:0.5px 0.6px 0.3px rgba(0,0,0,.7);">Axis Value</span><span class="t" style="left:504.20px;top:385.10px;line-height:11px;font-size:7px;font-weight:normal;font-style:normal;color:#fff6e0;letter-spacing:0.059px;text-shadow:0.5px 0.6px 0 rgba(120,70,0,.6);">WARNING!</span><span class="t" style="left:465.90px;top:429.00px;line-height:11px;font-size:7px;font-weight:bold;font-style:normal;color:#e8e8e8;letter-spacing:-0.068px;text-shadow:0.5px 0.6px 0.3px rgba(0,0,0,.7);">InputAxis Look Up / Down Mouse</span><span class="t" style="left:546.40px;top:459.20px;line-height:11px;font-size:7px;font-weight:normal;font-style:normal;color:#e4e4e4;letter-spacing:-0.196px;text-shadow:0.5px 0.6px 0.3px rgba(0,0,0,.7);">Axis Value</span><span class="t" style="left:504.20px;top:472.60px;line-height:11px;font-size:7px;font-weight:normal;font-style:normal;color:#fff6e0;letter-spacing:0.059px;text-shadow:0.5px 0.6px 0 rgba(120,70,0,.6);">WARNING!</span><span class="t" style="left:613.40px;top:332.10px;line-height:13px;font-size:9px;font-weight:bold;font-style:italic;color:#6cb7f2;font-family:'Liberation Serif',serif;">ƒ</span><span class="t" style="left:623.00px;top:332.65px;line-height:11px;font-size:7px;font-weight:bold;font-style:normal;color:#e8e8e8;letter-spacing:-0.087px;text-shadow:0.5px 0.6px 0.3px rgba(0,0,0,.7);">Add Controller Yaw Input</span><span class="t" style="left:623.30px;top:342.40px;line-height:11px;font-size:7px;font-weight:normal;font-style:italic;color:#92a184;letter-spacing:-0.175px;text-shadow:0.4px 0.5px 0 rgba(0,0,0,.3);">Target is Pawn</span><span class="t" style="left:624.40px;top:373.80px;line-height:11px;font-size:7px;font-weight:normal;font-style:normal;color:#e4e4e4;letter-spacing:-0.178px;text-shadow:0.5px 0.6px 0.3px rgba(0,0,0,.7);">Target</span><span class="t" style="left:649.10px;top:373.90px;line-height:11px;font-size:7px;font-weight:normal;font-style:normal;color:#a4a4a4;letter-spacing:-0.327px;">self</span><span class="t" style="left:624.10px;top:389.40px;line-height:11px;font-size:7px;font-weight:normal;font-style:normal;color:#e4e4e4;letter-spacing:-0.003px;text-shadow:0.5px 0.6px 0.3px rgba(0,0,0,.7);">Val</span><span class="t" style="left:613.40px;top:419.60px;line-height:13px;font-size:9px;font-weight:bold;font-style:italic;color:#6cb7f2;font-family:'Liberation Serif',serif;">ƒ</span><span class="t" style="left:623.00px;top:420.15px;line-height:11px;font-size:7px;font-weight:bold;font-style:normal;color:#e8e8e8;letter-spacing:-0.112px;text-shadow:0.5px 0.6px 0.3px rgba(0,0,0,.7);">Add Controller Pitch Input</span><span class="t" style="left:623.30px;top:429.90px;line-height:11px;font-size:7px;font-weight:normal;font-style:italic;color:#92a184;letter-spacing:-0.175px;text-shadow:0.4px 0.5px 0 rgba(0,0,0,.3);">Target is Pawn</span><span class="t" style="left:624.40px;top:461.30px;line-height:11px;font-size:7px;font-weight:normal;font-style:normal;color:#e4e4e4;letter-spacing:-0.178px;text-shadow:0.5px 0.6px 0.3px rgba(0,0,0,.7);">Target</span><span class="t" style="left:649.10px;top:461.40px;line-height:11px;font-size:7px;font-weight:normal;font-style:normal;color:#a4a4a4;letter-spacing:-0.327px;">self</span><span class="t" style="left:624.10px;top:476.90px;line-height:11px;font-size:7px;font-weight:normal;font-style:normal;color:#e4e4e4;letter-spacing:-0.003px;text-shadow:0.5px 0.6px 0.3px rgba(0,0,0,.7);">Val</span><span class="t" style="left:824.80px;top:402.50px;line-height:11px;font-size:7px;font-weight:bold;font-style:normal;color:#e6e6e6;letter-spacing:-0.075px;text-shadow:0.5px 0.6px 0.3px rgba(0,0,0,.7);">EnhancedInputAction JumpInput</span><span class="t" style="left:907.60px;top:418.10px;line-height:11px;font-size:7px;font-weight:normal;font-style:normal;color:#e4e4e4;letter-spacing:-0.145px;text-shadow:0.5px 0.6px 0.3px rgba(0,0,0,.7);">Triggered</span><span class="t" style="left:914.20px;top:433.70px;line-height:11px;font-size:7px;font-weight:normal;font-style:normal;color:#e4e4e4;letter-spacing:-0.111px;text-shadow:0.5px 0.6px 0.3px rgba(0,0,0,.7);">Started</span><span class="t" style="left:911.30px;top:448.70px;line-height:11px;font-size:7px;font-weight:normal;font-style:normal;color:#e4e4e4;letter-spacing:-0.253px;text-shadow:0.5px 0.6px 0.3px rgba(0,0,0,.7);">Ongoing</span><span class="t" style="left:904.70px;top:464.00px;line-height:11px;font-size:7px;font-weight:normal;font-style:normal;color:#e4e4e4;letter-spacing:-0.284px;text-shadow:0.5px 0.6px 0.3px rgba(0,0,0,.7);">Completed</span><span class="t" style="left:897.00px;top:478.90px;line-height:11px;font-size:7px;font-weight:normal;font-style:normal;color:#e4e4e4;letter-spacing:-0.116px;text-shadow:0.5px 0.6px 0.3px rgba(0,0,0,.7);">Action Value</span><span class="t" style="left:898.50px;top:493.60px;line-height:11px;font-size:7px;font-weight:normal;font-style:normal;color:#e4e4e4;letter-spacing:-0.058px;text-shadow:0.5px 0.6px 0.3px rgba(0,0,0,.7);">Input Action</span><span class="t" style="left:971.50px;top:376.30px;line-height:13px;font-size:9px;font-weight:bold;font-style:italic;color:#6cb7f2;font-family:'Liberation Serif',serif;">ƒ</span><span class="t" style="left:981.10px;top:376.85px;line-height:11px;font-size:7px;font-weight:bold;font-style:normal;color:#e8e8e8;letter-spacing:-0.268px;text-shadow:0.5px 0.6px 0.3px rgba(0,0,0,.7);">Jump</span><span class="t" style="left:981.40px;top:386.60px;line-height:11px;font-size:7px;font-weight:normal;font-style:italic;color:#92a184;letter-spacing:-0.094px;text-shadow:0.4px 0.5px 0 rgba(0,0,0,.3);">Target is Character</span><span class="t" style="left:982.50px;top:418.00px;line-height:11px;font-size:7px;font-weight:normal;font-style:normal;color:#e4e4e4;letter-spacing:-0.178px;text-shadow:0.5px 0.6px 0.3px rgba(0,0,0,.7);">Target</span><span class="t" style="left:1007.20px;top:418.10px;line-height:11px;font-size:7px;font-weight:normal;font-style:normal;color:#a4a4a4;letter-spacing:-0.327px;">self</span><span class="t" style="left:971.50px;top:455.00px;line-height:13px;font-size:9px;font-weight:bold;font-style:italic;color:#6cb7f2;font-family:'Liberation Serif',serif;">ƒ</span><span class="t" style="left:981.10px;top:455.55px;line-height:11px;font-size:7px;font-weight:bold;font-style:normal;color:#e8e8e8;letter-spacing:-0.073px;text-shadow:0.5px 0.6px 0.3px rgba(0,0,0,.7);">Stop Jumping</span><span class="t" style="left:981.40px;top:465.30px;line-height:11px;font-size:7px;font-weight:normal;font-style:italic;color:#92a184;letter-spacing:-0.094px;text-shadow:0.4px 0.5px 0 rgba(0,0,0,.3);">Target is Character</span><span class="t" style="left:982.50px;top:496.70px;line-height:11px;font-size:7px;font-weight:normal;font-style:normal;color:#e4e4e4;letter-spacing:-0.178px;text-shadow:0.5px 0.6px 0.3px rgba(0,0,0,.7);">Target</span><span class="t" style="left:1007.20px;top:496.80px;line-height:11px;font-size:7px;font-weight:normal;font-style:normal;color:#a4a4a4;letter-spacing:-0.327px;">self</span></div>
<div id="edge"></div>
<div id="top"><div id="strip"></div><div id="tabline"></div><div id="bar"></div><div class="sep" style="left:31px"></div><div class="sep" style="left:80px"></div><span class="t" style="left:112.60px;top:6.00px;line-height:16px;font-size:12px;font-weight:normal;font-style:normal;color:#a8a8a8;letter-spacing:-0.399px;">BP_DemoCharacter</span><span class="t" style="left:231.20px;top:6.00px;line-height:16px;font-size:12px;font-weight:normal;font-style:normal;color:#a8a8a8;letter-spacing:-0.398px;">Event Graph</span><svg class="layer" width="1023" height="681" viewBox="0 0 1023 681">
<g fill="#959595" stroke="none">
<path d="M7,9.2 h1.6 v8.2 h-1.6 z" opacity=".55"/>
<path d="M9.2,9.2 h5.2 v10 l-2.6,-2.2 l-2.6,2.2 z"/>
<path d="M43.6,9.8 L38,14 L43.6,18.2 V15.4 H49.2 V12.6 H43.6 Z"/>
<path d="M67.6,9.8 L73.2,14 L67.6,18.2 V15.4 H62 V12.6 H67.6 Z"/>
</g>
<path d="M19.4,12.8 L22.2,15.4 L25,12.8" fill="none" stroke="#b0b0b0" stroke-width="1.3" stroke-linecap="round" stroke-linejoin="round"/>
<g fill="#c4c4c4"><rect x="89.2" y="8.4" width="5.6" height="5.6" rx="0.8"/><rect x="98.6" y="9.4" width="4.2" height="3.4" rx="0.7"/><rect x="89.9" y="16.2" width="3.9" height="3.8" rx="0.7"/><rect x="98.6" y="15.6" width="4.2" height="3.5" rx="0.7"/></g>
<path d="M94.8,11.1 H98.6 M95,11.8 L99,17.2" stroke="#c4c4c4" stroke-width="1.2" fill="none"/>
<path d="M220.2,9.6 L224.6,14.1 L220.2,18.6" fill="none" stroke="#b4b4b4" stroke-width="1.5" stroke-linecap="round" stroke-linejoin="round"/>
</svg></div>
</body></html>
